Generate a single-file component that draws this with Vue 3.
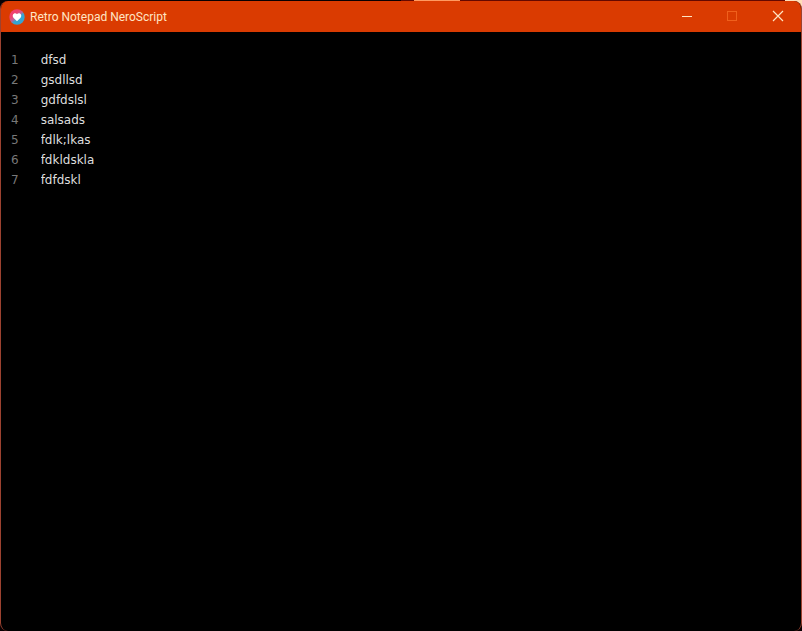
<script setup>
import { computed, ref } from 'vue'

const title = 'Retro Notepad NeroScript'
const text = ref(['dfsd', 'gsdllsd', 'gdfdslsl', 'salsads', 'fdlk;lkas', 'fdkldskla', 'fdfdskl'].join('\n'))

const lineCount = computed(() => text.value.split('\n').length)
</script>

<template>
  <div class="desktop">
    <main class="window">
      <header class="titlebar">
        <svg class="logo" viewBox="0 0 16 16" aria-hidden="true">
          <defs>
            <linearGradient id="ring" x1="0.1" y1="0.1" x2="0.8" y2="0.9">
              <stop offset="0.3" stop-color="#f0406f" />
              <stop offset="0.5" stop-color="#c0609a" />
              <stop offset="0.65" stop-color="#35a5d2" />
            </linearGradient>
          </defs>
          <circle cx="8" cy="8" r="7.7" fill="url(#ring)" />
          <path
            d="M8 12.300 4.400 8.700C3.300 7.400 3.600 5.100 5.100 4.500 6.300 4.100 7.400 4.500 8 5.300 8.600 4.500 9.700 4.100 10.900 4.500 12.400 5.100 12.700 7.400 11.600 8.700Z"
            fill="#fff"
          />
        </svg>
        <h1>{{ title }}</h1>

        <div class="controls">
          <button type="button" aria-label="Minimize">
            <svg viewBox="0 0 12 12"><path d="M2 6.500H12" /></svg>
          </button>
          <button type="button" aria-label="Maximize" disabled>
            <svg viewBox="0 0 12 12"><rect x="1.500" y="1.500" width="9" height="9" /></svg>
          </button>
          <button type="button" aria-label="Close">
            <svg viewBox="0 0 12 12"><path d="M1 1 11 11M11 1 1 11" stroke-width="1.200" /></svg>
          </button>
        </div>
      </header>

      <section class="editor">
        <div class="gutter" aria-hidden="true">
          <span v-for="n in lineCount" :key="n">{{ n }}</span>
        </div>
        <textarea v-model="text" aria-label="Document text" spellcheck="false" wrap="off" />
      </section>
    </main>
  </div>
</template>

<style>
body {
  margin: 0;
  background: #080002;
}
</style>

<style scoped>
.desktop {
  box-sizing: border-box;
  height: 100vh;
  padding-top: 1px;
  display: flex;
  background:
    linear-gradient(#ff9a60, #ff9a60) 54.8% 0 / 46px 1px no-repeat,
    linear-gradient(#ffdfb8, #ffdfb8) 100% 0 / 17px 10px no-repeat,
    linear-gradient(#650800, #650800) 100% 0 / 50% 1px no-repeat,
    #080002;
}

.window {
  flex: 1;
  display: flex;
  flex-direction: column;
  overflow: hidden;
  border: solid #9c4230;
  border-width: 0 1px;
  border-radius: 8px;
  background: #000;
}

.titlebar {
  height: 31px;
  flex: none;
  margin: 0 -1px;
  padding-left: 9px;
  display: flex;
  align-items: center;
  background: #da3b01;
  color: #ffe5c4;
}

.logo {
  width: 16px;
  height: 16px;
}

h1 {
  margin: 0 0 0 5px;
  font: 400 12px/16px 'Segoe UI', Roboto, sans-serif;
}

.controls {
  height: 30px;
  align-self: flex-start;
  margin-left: auto;
  padding-right: 1px;
  display: flex;
}

button {
  width: 46px;
  padding: 0;
  display: grid;
  place-items: center;
  border: 0;
  background: transparent;
  color: #ffe5c4;
}

button:hover:enabled {
  background: #b93201;
}

button:disabled {
  color: #f0601c;
}

button svg {
  width: 12px;
  height: 12px;
  fill: none;
  stroke: currentColor;
}

.editor {
  flex: 1;
  padding: 18px 10px 10px;
  display: flex;
  gap: 22px;
  font: 12px/20px 'DejaVu Sans', sans-serif;
}

.gutter {
  display: flex;
  flex-direction: column;
  color: #787878;
}

textarea {
  flex: 1;
  padding: 0;
  border: 0;
  outline: 0;
  resize: none;
  background: transparent;
  color: #dedede;
  font: inherit;
}
</style>
